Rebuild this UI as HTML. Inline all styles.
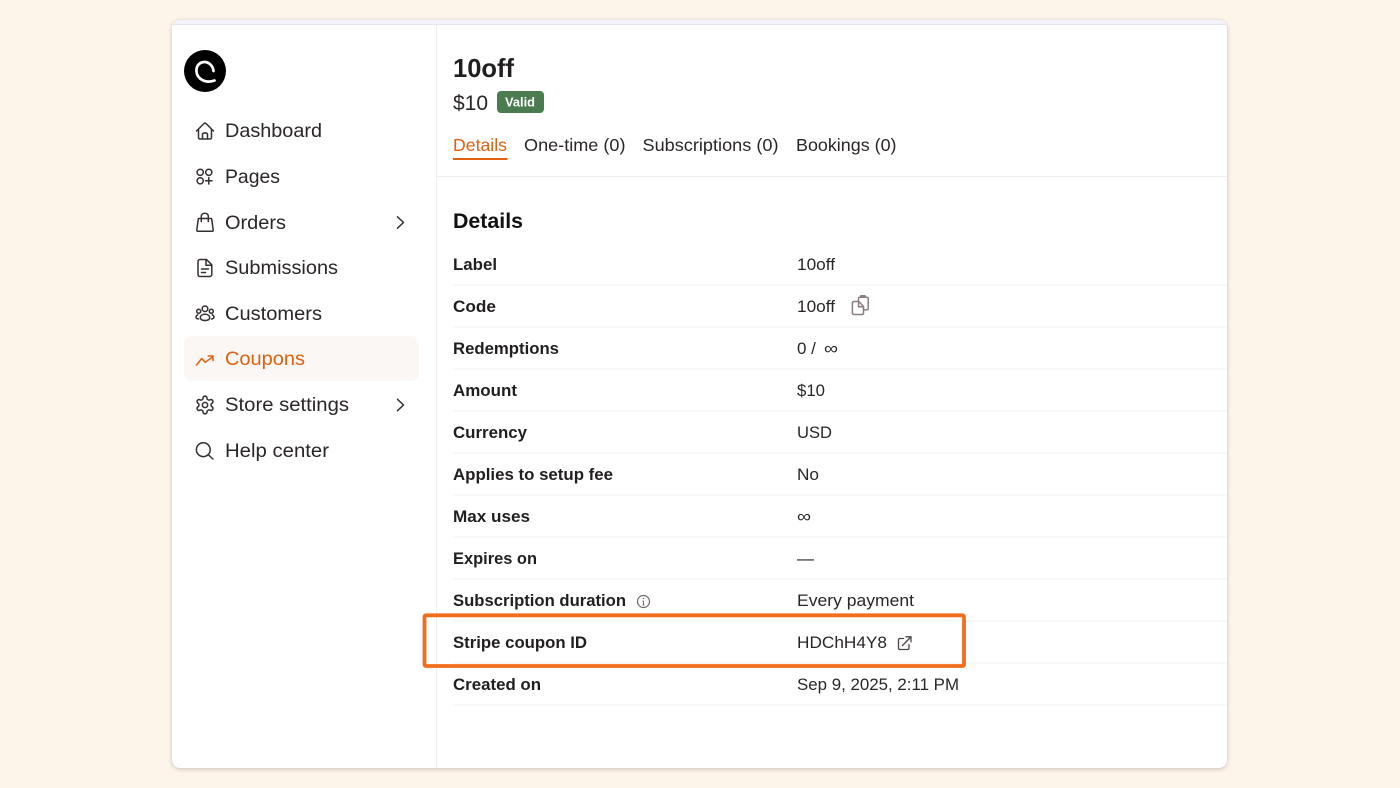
<!DOCTYPE html>
<html lang="en">
<head>
<meta charset="utf-8">
<title>10off coupon details</title>
<style>
html,body{margin:0;padding:0;width:1400px;height:788px;overflow:hidden;background:#fdf4ea}
#card{position:absolute;left:172px;top:20px;width:1055px;height:748px;background:#fff;border-radius:8px;box-shadow:0 1px 4px rgba(70,50,40,.28);overflow:hidden}
#strip{position:absolute;left:0;top:0;width:100%;height:4px;background:#f3f3fc;border-bottom:1px solid #e6e6f0}
svg{position:absolute;left:0;top:0;filter:blur(.35px)}
text{font-family:"Liberation Sans",sans-serif;fill:#2a2627}
.n{font-size:19.5px}
.t{font-size:17.5px}
.l{font-size:17px;font-weight:700;fill:#211e1f}
.v{font-size:17px}
.i{fill:none;stroke:#35302f;stroke-width:1.5;stroke-linecap:round;stroke-linejoin:round}
.m{fill:none;stroke:#8b7c80;stroke-width:1.5;stroke-linecap:round;stroke-linejoin:round}
.r{stroke:#f1efee;stroke-width:1}
</style>
</head>
<body>
<div id="card"><div id="strip"></div></div>
<svg width="1400" height="788" viewBox="0 0 1400 788" xmlns="http://www.w3.org/2000/svg">
<rect x="436" y="25" width="1" height="743" fill="#f1efee"/>
<rect x="437" y="176" width="790" height="1" fill="#f1efee"/>

<circle cx="205" cy="71" r="21" fill="#000"/>
<path d="M213.500 71C213 65.500 208.500 61.800 204 62C199 62.300 196 66.500 196.500 71.500C197 78.500 205 84 214.500 80.500" fill="none" stroke="#fff" stroke-width="2.700" stroke-linecap="round"/>

<rect x="184" y="336" width="235" height="45" rx="8" fill="#faf7f4"/>

<path class="i" d="M196.500 131L204 123.500C204.600 122.900 205.400 122.900 206 123.500L213.500 131M198.500 129V137.500C198.500 138.300 199.100 139 200 139H210C210.900 139 211.500 138.300 211.500 137.500V129M202.500 139V134.500C202.500 133.700 203.100 133 204 133H206C206.900 133 207.500 133.700 207.500 134.500V139"/>
<text class="n" x="225" y="137" textLength="97" lengthAdjust="spacingAndGlyphs">Dashboard</text>

<circle class="i" cx="200.200" cy="172.300" r="3.100"/>
<circle class="i" cx="208.800" cy="172.300" r="3.100"/>
<circle class="i" cx="200.200" cy="180.800" r="3.100"/>
<path class="i" d="M208.800 177.500V184M205.500 180.800H212"/>
<text class="n" x="225" y="183" textLength="55" lengthAdjust="spacingAndGlyphs">Pages</text>

<path class="i" d="M199 218.500H211C211.300 218.500 211.600 218.700 211.700 219L213.200 230C213.300 230.800 212.800 231.300 212 231.300H198C197.200 231.300 196.700 230.800 196.800 230L198.300 219C198.400 218.700 198.700 218.500 199 218.500ZM201.300 221.500V216.300C201.300 214.500 203 213.200 204.800 213.200C206.700 213.200 208.300 214.500 208.300 216.300V221.500"/>
<text class="n" x="225" y="229" textLength="61" lengthAdjust="spacingAndGlyphs">Orders</text>
<path class="i" d="M397.500 216.800L403.500 222.500L397.500 228.200"/>

<path class="i" d="M200 259.500H206.500L211.800 264.800V274.500C211.800 275.600 211 276.500 209.800 276.500H200C198.900 276.500 198 275.600 198 274.500V261.500C198 260.400 198.900 259.500 200 259.500ZM206 260V265.200H211.500M201.500 269H208.500M201.500 272.500H205.500"/>
<text class="n" x="225" y="274" textLength="113" lengthAdjust="spacingAndGlyphs">Submissions</text>

<circle class="i" cx="205" cy="308.800" r="2.800"/>
<circle class="i" cx="198.700" cy="311.300" r="2"/>
<circle class="i" cx="211.300" cy="311.300" r="2"/>
<path class="i" d="M200.300 317.800C200.300 315.500 202.500 314.300 205 314.300C207.500 314.300 209.700 315.500 209.700 317.800C209.700 319.500 207.500 320.500 205 320.500C202.500 320.500 200.300 319.500 200.300 317.800ZM197.800 314.800C196.600 315.200 196 316.200 196 317.300C196 318.300 197 318.800 198.500 319M212.200 314.800C213.400 315.200 214 316.200 214 317.300C214 318.300 213 318.800 211.500 319"/>
<text class="n" x="225" y="320" textLength="97" lengthAdjust="spacingAndGlyphs">Customers</text>

<path class="i" style="stroke:#e0600f" d="M196.500 365L201.700 358.500L205.200 362.300L212.800 356.700M208.200 356H213V360.500"/>
<text class="n" style="fill:#e0600f" x="225" y="365" textLength="80" lengthAdjust="spacingAndGlyphs">Coupons</text>

<g transform="translate(194.440 394.440) scale(.88)">
<path fill="none" stroke="#35302f" stroke-width="1.750" stroke-linecap="round" stroke-linejoin="round" d="M12.220 2h-.44a2 2 0 0 0-2 2v.18a2 2 0 0 1-1 1.730l-.43.250a2 2 0 0 1-2 0l-.15-.08a2 2 0 0 0-2.730.730l-.22.380a2 2 0 0 0 .730 2.730l.15.100a2 2 0 0 1 1 1.720v.510a2 2 0 0 1-1 1.740l-.15.090a2 2 0 0 0-.730 2.730l.22.380a2 2 0 0 0 2.730.730l.15-.08a2 2 0 0 1 2 0l.43.250a2 2 0 0 1 1 1.730V20a2 2 0 0 0 2 2h.44a2 2 0 0 0 2-2v-.18a2 2 0 0 1 1-1.730l.43-.25a2 2 0 0 1 2 0l.15.08a2 2 0 0 0 2.730-.730l.22-.39a2 2 0 0 0-.730-2.730l-.15-.08a2 2 0 0 1-1-1.740v-.5a2 2 0 0 1 1-1.740l.15-.09a2 2 0 0 0 .730-2.730l-.22-.38a2 2 0 0 0-2.730-.730l-.15.08a2 2 0 0 1-2 0l-.43-.25a2 2 0 0 1-1-1.730V4a2 2 0 0 0-2-2z"/>
<circle cx="12" cy="12" r="3" fill="none" stroke="#35302f" stroke-width="1.750"/>
</g>
<text class="n" x="225" y="411" textLength="124" lengthAdjust="spacingAndGlyphs">Store settings</text>
<path class="i" d="M397.500 399.300L403.500 405L397.500 410.700"/>

<circle class="i" cx="203.300" cy="449.700" r="6.900"/>
<path class="i" d="M208.500 455L213 459"/>
<text class="n" x="225" y="457" textLength="104" lengthAdjust="spacingAndGlyphs">Help center</text>

<text x="453" y="77" style="font-size:26px;font-weight:700;fill:#211e1f" textLength="61" lengthAdjust="spacingAndGlyphs">10off</text>
<text x="453" y="110" style="font-size:21.500px" textLength="35" lengthAdjust="spacingAndGlyphs">$10</text>
<rect x="497" y="91" width="47" height="22" rx="4" fill="#4a7c50"/>
<text x="505" y="106.500" style="font-size:13px;font-weight:700;fill:#fff" textLength="30" lengthAdjust="spacingAndGlyphs">Valid</text>

<text class="t" style="fill:#e0600f" x="453" y="151" textLength="54" lengthAdjust="spacingAndGlyphs">Details</text>
<rect x="453" y="158" width="54.500" height="2" fill="#e0600f"/>
<text class="t" x="524" y="151" textLength="101.500" lengthAdjust="spacingAndGlyphs">One-time (0)</text>
<text class="t" x="642.500" y="151" textLength="136" lengthAdjust="spacingAndGlyphs">Subscriptions (0)</text>
<text class="t" x="796" y="151" textLength="100.500" lengthAdjust="spacingAndGlyphs">Bookings (0)</text>

<text x="453" y="228" style="font-size:21.500px;font-weight:700;fill:#111" textLength="70" lengthAdjust="spacingAndGlyphs">Details</text>

<g class="r">
<line x1="453" x2="1227" y1="285" y2="285"/>
<line x1="453" x2="1227" y1="327" y2="327"/>
<line x1="453" x2="1227" y1="369" y2="369"/>
<line x1="453" x2="1227" y1="411" y2="411"/>
<line x1="453" x2="1227" y1="453" y2="453"/>
<line x1="453" x2="1227" y1="495" y2="495"/>
<line x1="453" x2="1227" y1="537" y2="537"/>
<line x1="453" x2="1227" y1="579" y2="579"/>
<line x1="453" x2="1227" y1="621" y2="621"/>
<line x1="453" x2="1227" y1="663" y2="663"/>
<line x1="453" x2="1227" y1="705" y2="705"/>
</g>

<text class="l" x="453" y="270" textLength="44" lengthAdjust="spacingAndGlyphs">Label</text>
<text class="v" x="797" y="270" textLength="38" lengthAdjust="spacingAndGlyphs">10off</text>

<text class="l" x="453" y="312" textLength="43" lengthAdjust="spacingAndGlyphs">Code</text>
<text class="v" x="797" y="312" textLength="38" lengthAdjust="spacingAndGlyphs">10off</text>
<path class="m" d="M858.500 300.500V298.500C858.500 297.700 859 297.200 859.800 297.200H866.800C867.600 297.200 868.200 297.800 868.200 298.600V308.500C868.200 309.300 867.600 309.900 866.800 309.900H864.500M860.800 297.200V295.800H865V297.200"/>
<path class="m" d="M853.800 301.500H858.800L863.500 306.500V313C863.500 313.800 862.900 314.500 862 314.500H853.800C853 314.500 852.400 313.800 852.400 313V303C852.400 302.200 853 301.500 853.800 301.500ZM858.500 302V306.800H863.200"/>

<text class="l" x="453" y="354" textLength="106" lengthAdjust="spacingAndGlyphs">Redemptions</text>
<text class="v" x="797" y="354">0 /</text>
<text class="v" x="824" y="354" textLength="14" lengthAdjust="spacingAndGlyphs">∞</text>

<text class="l" x="453" y="396" textLength="64" lengthAdjust="spacingAndGlyphs">Amount</text>
<text class="v" x="797" y="396" textLength="28" lengthAdjust="spacingAndGlyphs">$10</text>

<text class="l" x="453" y="438" textLength="74" lengthAdjust="spacingAndGlyphs">Currency</text>
<text class="v" x="797" y="438" textLength="35" lengthAdjust="spacingAndGlyphs">USD</text>

<text class="l" x="453" y="480" textLength="160" lengthAdjust="spacingAndGlyphs">Applies to setup fee</text>
<text class="v" x="797" y="480" textLength="22" lengthAdjust="spacingAndGlyphs">No</text>

<text class="l" x="453" y="522" textLength="77" lengthAdjust="spacingAndGlyphs">Max uses</text>
<text class="v" x="797" y="522" textLength="14" lengthAdjust="spacingAndGlyphs">∞</text>

<text class="l" x="453" y="564" textLength="84" lengthAdjust="spacingAndGlyphs">Expires on</text>
<text class="v" x="797" y="564" textLength="17" lengthAdjust="spacingAndGlyphs">—</text>

<text class="l" x="453" y="606" textLength="173" lengthAdjust="spacingAndGlyphs">Subscription duration</text>
<circle cx="643.500" cy="601.500" r="6" fill="none" stroke="#6f6668" stroke-width="1.200"/>
<path d="M643.500 601V605M642.500 601H643.500M642.500 605H644.500" fill="none" stroke="#6f6668" stroke-width="1"/>
<circle cx="643.500" cy="598.500" r=".8" fill="#6f6668"/>
<text class="v" x="797" y="606" textLength="117" lengthAdjust="spacingAndGlyphs">Every payment</text>

<text class="l" x="453" y="648" textLength="134" lengthAdjust="spacingAndGlyphs">Stripe coupon ID</text>
<text class="v" x="797" y="648" textLength="90" lengthAdjust="spacingAndGlyphs">HDChH4Y8</text>
<path class="i" style="stroke:#4b4547;stroke-width:1.300" d="M903.500 638.500H900C899 638.500 898.500 639.200 898.500 640V648C898.500 648.900 899 649.500 900 649.500H907.500C908.400 649.500 909 648.900 909 648V644.500M902.500 645.500L910.800 637M906 636.800H911V641.800"/>

<text class="l" x="453" y="690" textLength="88" lengthAdjust="spacingAndGlyphs">Created on</text>
<text class="v" x="797" y="690" textLength="162" lengthAdjust="spacingAndGlyphs">Sep 9, 2025, 2:11 PM</text>

<rect x="424.500" y="615.300" width="539.500" height="50.700" rx="1.500" fill="none" stroke="#f26e1d" stroke-width="3.800"/>
</svg>
</body>
</html>
